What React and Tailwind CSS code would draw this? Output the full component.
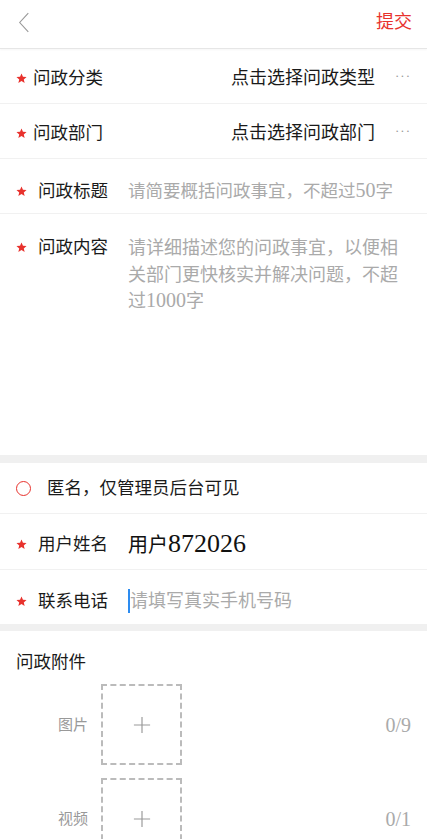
import { useState } from 'react'

const FONT = { fontFamily: '"Liberation Serif", "Noto Sans CJK SC", serif' }

function Star({ className = '' }) {
  return (
    <svg viewBox="0 0 24 24" className={`w-[11px] h-[11px] shrink-0 ${className}`} fill="#e8322d">
      <path d="M12 1l3.2 7.3 7.8.6-6 5.1 1.9 7.7L12 17.6l-6.9 4.1L7 14 1 8.9l7.8-.6z" />
    </svg>
  )
}

function SelectRow({ label, value }) {
  return (
    <div className="h-[55px] flex items-center pl-4 pr-4 pt-[5px] border-b border-[#f1f1f1]">
      <Star />
      <span className="ml-[6px] text-[17.5px] text-[#1a1a1a]">{label}</span>
      <span className="ml-auto text-[18px] text-[#1a1a1a]">{value}</span>
      <span className="ml-[20px] text-[13px] text-[#999] tracking-[1px] -mt-[6px]">···</span>
    </div>
  )
}

function UploadRow({ label, count }) {
  return (
    <div className="flex items-center pl-[58px] pr-4 mb-[13px]">
      <span className="w-[43px] text-[15px] text-[#999]">{label}</span>
      <div className="w-[81px] h-[81px] border-2 border-dashed border-[#bbb] flex items-center justify-center">
        <svg viewBox="0 0 20 20" className="w-[18px] h-[18px]" stroke="#999" strokeWidth="1.3">
          <path d="M10 1v18M1 10h18" />
        </svg>
      </div>
      <span className="ml-auto text-[20px] text-[#aaa]">{count}</span>
    </div>
  )
}

export default function App() {
  const [anon, setAnon] = useState(false)

  return (
    <div className="min-h-screen bg-white" style={FONT}>
      {/* Header */}
      <div className="h-[49px] flex items-center justify-between pl-[18px] pr-[15px] border-b border-[#e6e6e6] shadow-[0_1px_2px_rgba(0,0,0,0.04)]">
        <svg viewBox="0 0 14 24" className="w-[12px] h-[21px] -mt-[4px]" fill="none" stroke="#999" strokeWidth="1.3">
          <path d="M12 1L2 12l10 11" />
        </svg>
        <span className="text-[18px] text-[#e8322d] -mt-[4px]">提交</span>
      </div>

      <SelectRow label="问政分类" value="点击选择问政类型" />
      <SelectRow label="问政部门" value="点击选择问政部门" />

      <div className="h-[55px] flex items-center pl-4 pr-4 pt-[10px] border-b border-[#f1f1f1]">
        <Star />
        <span className="ml-[11px] w-[90px] shrink-0 text-[17.5px] text-[#1a1a1a]">问政标题</span>
        <span className="text-[17.5px] text-[#aaa]">
          请简要概括问政事宜，不超过<span className="text-[20px] leading-none">50</span>字
        </span>
      </div>

      <div className="h-[241px] flex items-start pl-4 pr-4 pt-[21px]">
        <Star className="mt-[7px]" />
        <span className="ml-[11px] w-[90px] shrink-0 text-[17.5px] text-[#1a1a1a] leading-[24px]">问政内容</span>
        <p className="text-[18px] text-[#aaa] leading-[26.5px] w-[274px]">
          请详细描述您的问政事宜，以便相关部门更快核实并解决问题，不超过<span className="text-[20px] leading-none">1000</span>字
        </p>
      </div>

      <div className="h-[8px] bg-[#f0f0f0]" />

      <div
        className="h-[51px] flex items-center pl-4 pr-4 pt-[1px] border-b border-[#f1f1f1] cursor-pointer"
        onClick={() => setAnon(!anon)}
      >
        <span className={`w-[15px] h-[15px] rounded-full border border-[#e8322d] ${anon ? 'bg-[#e8322d]' : ''}`} />
        <span className="ml-[16px] text-[17.5px] text-[#1a1a1a]">匿名，仅管理员后台可见</span>
      </div>

      <div className="h-[56px] flex items-center pl-4 pr-4 pt-[6px] border-b border-[#f1f1f1]">
        <Star />
        <span className="ml-[11px] w-[90px] shrink-0 text-[17.5px] text-[#1a1a1a]">用户姓名</span>
        <span className="text-[20px] text-[#111]">
          用户<span className="text-[26px] leading-none">872026</span>
        </span>
      </div>

      <div className="h-[54px] flex items-center pl-4 pr-4 pt-[8px]">
        <Star />
        <span className="ml-[11px] w-[90px] shrink-0 text-[17.5px] text-[#1a1a1a]">联系电话</span>
        <span className="w-[2px] h-[24px] bg-[#2d8cf0]" />
        <span className="text-[18px] text-[#aaa]">请填写真实手机号码</span>
      </div>

      <div className="h-[7px] bg-[#f0f0f0]" />

      <div className="pl-4 pt-[18px] pb-[9px] text-[17.5px] text-[#1a1a1a]">问政附件</div>
      <UploadRow label="图片" count="0/9" />
      <UploadRow label="视频" count="0/1" />
    </div>
  )
}
